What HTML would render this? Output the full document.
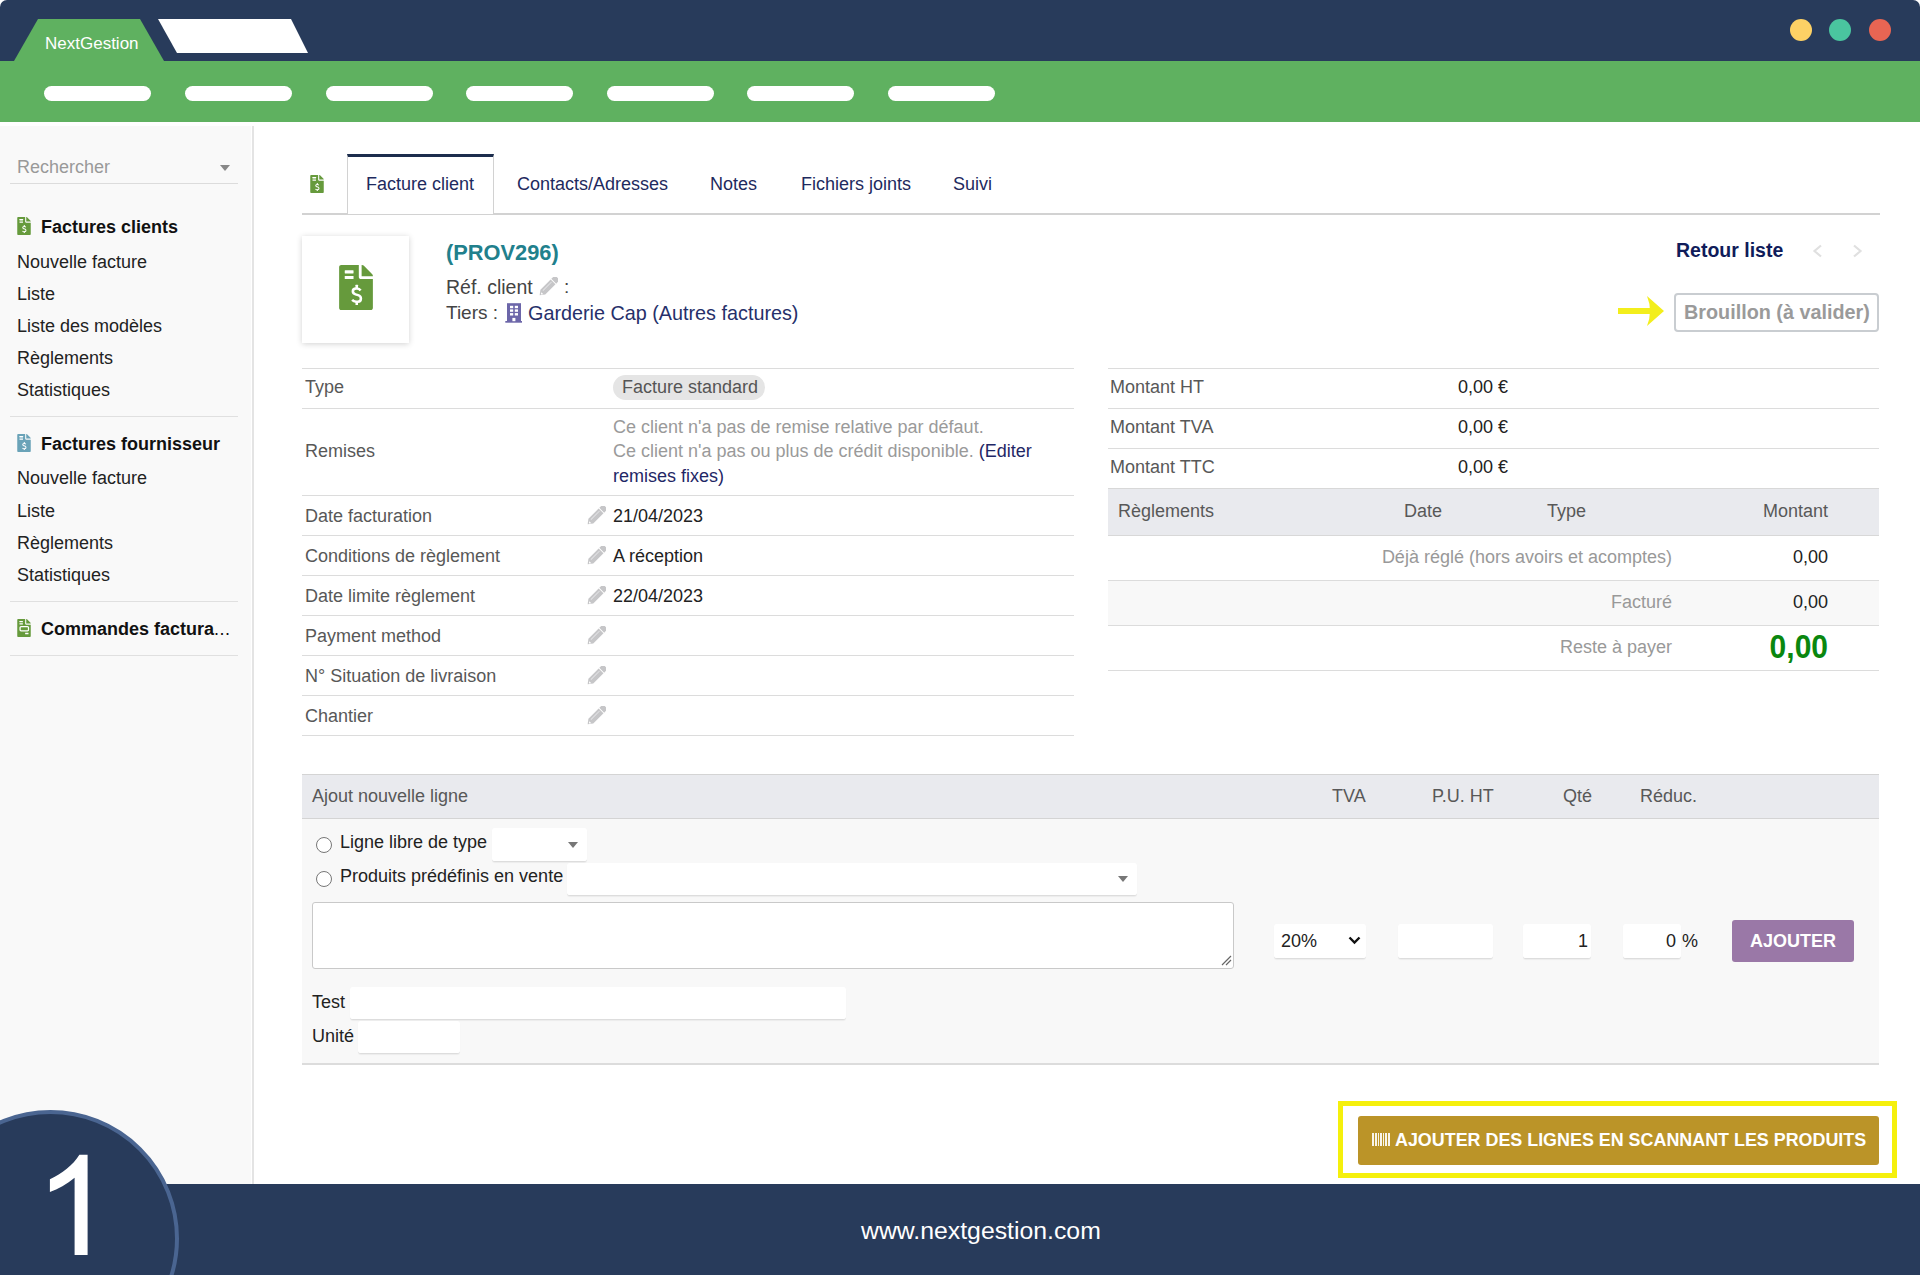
<!DOCTYPE html>
<html><head><meta charset="utf-8">
<style>
*{margin:0;padding:0;box-sizing:border-box}
html,body{width:1920px;height:1275px;overflow:hidden;background:#fff;font-family:"Liberation Sans",sans-serif;color:#222}
.a{position:absolute}
.t{position:absolute;white-space:nowrap;line-height:20px;font-size:18px}
#top{left:0;top:0;width:1920px;height:61px;background:#283b5b;border-radius:7px 7px 0 0}
#green{left:0;top:61px;width:1920px;height:61px;background:#5fb160}
.pill{position:absolute;top:86px;width:107px;height:15px;border-radius:8px;background:#fff}
.dot{position:absolute;top:19px;width:22px;height:22px;border-radius:50%}
#side{left:0;top:126px;width:251px;height:1058px;background:#f9f9f9}
#sideb{left:252px;top:126px;width:2px;height:1058px;background:#e4e4e4}
.sep{position:absolute;left:10px;width:228px;height:1px;background:#e0e0e0}
.si{position:absolute;left:17px;white-space:nowrap;font-size:18px;line-height:20px;color:#222}
.sh{position:absolute;left:41px;white-space:nowrap;font-size:18px;line-height:20px;font-weight:bold;color:#111}
#foot{left:0;top:1184px;width:1920px;height:91px;background:#283b5b}
.tab{color:#1e2a5e}
.lb{left:305px;color:#585858}
.r{text-align:right}
.hl{position:absolute;left:302px;width:772px;height:1px;background:#dcdcdc}
.hr{position:absolute;left:1108px;width:771px;height:1px;background:#dcdcdc}
.radio{width:16px;height:16px;border-radius:50%;border:1px solid #777;background:#fff}
.inp{background:#fff;border-radius:3px;border-bottom:1px solid #ddd;box-shadow:0 1px 1px rgba(0,0,0,.05)}
</style></head><body>
<div id="top" class="a"></div>
<svg class="a" style="left:0;top:0" width="320" height="62">
  <polygon points="14,61 38,19 140,19 164,61" fill="#5fb160"/>
  <polygon points="158,19 291,19 308,53 177,53" fill="#fff"/>
</svg>
<div class="t" style="left:45px;top:34px;font-size:17px;color:#fff">NextGestion</div>
<div class="dot" style="left:1790px;background:#fdd165"></div>
<div class="dot" style="left:1829px;background:#4ac59f"></div>
<div class="dot" style="left:1869px;background:#e86553"></div>
<div id="green" class="a"></div>
<div class="pill" style="left:44px"></div>
<div class="pill" style="left:185px"></div>
<div class="pill" style="left:326px"></div>
<div class="pill" style="left:466px"></div>
<div class="pill" style="left:607px"></div>
<div class="pill" style="left:747px"></div>
<div class="pill" style="left:888px"></div>

<!-- SIDEBAR -->
<div id="side" class="a"></div><div id="sideb" class="a"></div>


<div class="t" style="left:17px;top:157px;color:#999">Rechercher</div>
<svg class="a" style="left:220px;top:165px" width="10" height="7"><polygon points="0,0 10,0 5,6" fill="#888"/></svg>
<div class="sep" style="top:183px;left:10px;width:228px;background:#dcdcdc"></div>
<svg class="a" style="left:17px;top:217px;fill:#669a3c" width="14" height="18" viewBox="0 0 384 512"><path d="M224,136V0H24C10.7,0 0,10.7 0,24V488C0,501.3 10.7,512 24,512H360C373.3,512 384,501.3 384,488V160H248C234.8,160 224,149.2 224,136Z"/>
   <path d="M377,105L279.1,7C274.6,2.5 268.5,0 262.1,0H256V128H384V121.9C384,115.6 381.5,109.5 377,105Z"/>
   <rect x="64" y="60" width="100" height="36" rx="4" fill="#fff"/>
   <rect x="64" y="126" width="100" height="34" rx="4" fill="#fff"/>
   <path d="M244,290C234,274 220,267 203,267H193C170,267 156,282 156,300C156,318 168,329 186,334L216,343C236,349 248,363 248,383C248,403 234,417 211,417H193C173,417 158,409 148,398" fill="none" stroke="#fff" stroke-width="29"/>
   <rect x="186" y="226" width="29" height="44" rx="4" fill="#fff"/>
   <rect x="186" y="412" width="29" height="44" rx="4" fill="#fff"/></svg>
<div class="sh" style="top:217px">Factures clients</div>
<div class="si" style="top:252px">Nouvelle facture</div>
<div class="si" style="top:284px">Liste</div>
<div class="si" style="top:316px">Liste des modèles</div>
<div class="si" style="top:348px">Règlements</div>
<div class="si" style="top:380px">Statistiques</div>
<div class="sep" style="top:416px"></div>
<svg class="a" style="left:17px;top:434px;fill:#6aa3b8" width="14" height="18" viewBox="0 0 384 512"><path d="M224,136V0H24C10.7,0 0,10.7 0,24V488C0,501.3 10.7,512 24,512H360C373.3,512 384,501.3 384,488V160H248C234.8,160 224,149.2 224,136Z"/>
   <path d="M377,105L279.1,7C274.6,2.5 268.5,0 262.1,0H256V128H384V121.9C384,115.6 381.5,109.5 377,105Z"/>
   <rect x="64" y="60" width="100" height="36" rx="4" fill="#fff"/>
   <rect x="64" y="126" width="100" height="34" rx="4" fill="#fff"/>
   <path d="M244,290C234,274 220,267 203,267H193C170,267 156,282 156,300C156,318 168,329 186,334L216,343C236,349 248,363 248,383C248,403 234,417 211,417H193C173,417 158,409 148,398" fill="none" stroke="#fff" stroke-width="29"/>
   <rect x="186" y="226" width="29" height="44" rx="4" fill="#fff"/>
   <rect x="186" y="412" width="29" height="44" rx="4" fill="#fff"/></svg>
<div class="sh" style="top:434px">Factures fournisseur</div>
<div class="si" style="top:468px">Nouvelle facture</div>
<div class="si" style="top:501px">Liste</div>
<div class="si" style="top:533px">Règlements</div>
<div class="si" style="top:565px">Statistiques</div>
<div class="sep" style="top:601px"></div>
<svg class="a" style="left:17px;top:619px;fill:#669a3c" width="14" height="18" viewBox="0 0 384 512"><path d="M224,136V0H24C10.7,0 0,10.7 0,24V488C0,501.3 10.7,512 24,512H360C373.3,512 384,501.3 384,488V160H248C234.8,160 224,149.2 224,136Z"/>
   <path d="M377,105L279.1,7C274.6,2.5 268.5,0 262.1,0H256V128H384V121.9C384,115.6 381.5,109.5 377,105Z"/>
   <rect x="64" y="60" width="96" height="34" rx="4" fill="#fff"/>
   <rect x="64" y="124" width="96" height="34" rx="4" fill="#fff"/>
   <rect x="80" y="216" width="240" height="120" rx="28" fill="none" stroke="#fff" stroke-width="36"/>
   <rect x="224" y="392" width="96" height="40" rx="6" fill="#fff"/></svg>
<div class="sh" style="top:619px">Commandes factura<span style="font-weight:normal;letter-spacing:0.5px">...</span></div>
<div class="sep" style="top:655px"></div>



<!-- tabs -->
<svg class="a" style="left:310px;top:175px;fill:#669a3c" width="14" height="18" viewBox="0 0 384 512"><path d="M224,136V0H24C10.7,0 0,10.7 0,24V488C0,501.3 10.7,512 24,512H360C373.3,512 384,501.3 384,488V160H248C234.8,160 224,149.2 224,136Z"/>
   <path d="M377,105L279.1,7C274.6,2.5 268.5,0 262.1,0H256V128H384V121.9C384,115.6 381.5,109.5 377,105Z"/>
   <rect x="64" y="60" width="100" height="36" rx="4" fill="#fff"/>
   <rect x="64" y="126" width="100" height="34" rx="4" fill="#fff"/>
   <path d="M244,290C234,274 220,267 203,267H193C170,267 156,282 156,300C156,318 168,329 186,334L216,343C236,349 248,363 248,383C248,403 234,417 211,417H193C173,417 158,409 148,398" fill="none" stroke="#fff" stroke-width="29"/>
   <rect x="186" y="226" width="29" height="44" rx="4" fill="#fff"/>
   <rect x="186" y="412" width="29" height="44" rx="4" fill="#fff"/></svg>
<div class="a" style="left:302px;top:213px;width:1578px;height:2px;background:#d2d2d2"></div>
<div class="a" style="left:347px;top:154px;width:147px;height:60px;background:#fff;border:1px solid #d2d2d2;border-bottom:none;border-top:3px solid #1c2d4d"></div>
<div class="t tab" style="left:366px;top:174px">Facture client</div>
<div class="t tab" style="left:517px;top:174px">Contacts/Adresses</div>
<div class="t tab" style="left:710px;top:174px">Notes</div>
<div class="t tab" style="left:801px;top:174px">Fichiers joints</div>
<div class="t tab" style="left:953px;top:174px">Suivi</div>

<!-- header -->
<div class="a" style="left:302px;top:236px;width:107px;height:107px;background:#fff;box-shadow:0 1px 6px rgba(0,0,0,.18)"></div>
<svg class="a" style="left:339px;top:265px;fill:#669a3c" width="34" height="45" viewBox="0 0 384 512"><path d="M224,136V0H24C10.7,0 0,10.7 0,24V488C0,501.3 10.7,512 24,512H360C373.3,512 384,501.3 384,488V160H248C234.8,160 224,149.2 224,136Z"/>
   <path d="M377,105L279.1,7C274.6,2.5 268.5,0 262.1,0H256V128H384V121.9C384,115.6 381.5,109.5 377,105Z"/>
   <rect x="64" y="60" width="100" height="36" rx="4" fill="#fff"/>
   <rect x="64" y="126" width="100" height="34" rx="4" fill="#fff"/>
   <path d="M244,290C234,274 220,267 203,267H193C170,267 156,282 156,300C156,318 168,329 186,334L216,343C236,349 248,363 248,383C248,403 234,417 211,417H193C173,417 158,409 148,398" fill="none" stroke="#fff" stroke-width="29"/>
   <rect x="186" y="226" width="29" height="44" rx="4" fill="#fff"/>
   <rect x="186" y="412" width="29" height="44" rx="4" fill="#fff"/></svg>
<div class="t" style="left:446px;top:242px;font-size:21.8px;line-height:22px;font-weight:bold;color:#21808c">(PROV296)</div>
<div class="t" style="left:446px;top:277px;font-size:19.5px;color:#444">Réf. client</div>
<svg class="a" style="left:539px;top:277px" width="19" height="19" viewBox="0 0 100 100"><g transform="translate(50,50) rotate(-45)" fill="#c6c6c8"><path d="M-66,0 L-42,-18 H34 V18 H-42 Z"/><path d="M-58,2 L-48,-6 L-48,10 Z" fill="#fff"/><rect x="-36" y="-8" width="64" height="5" fill="#e2e2e4"/><path d="M39,-18 H54 Q66,-18 66,-6 V6 Q66,18 54,18 H39 Z"/></g></svg>
<div class="t" style="left:564px;top:277px;font-size:19px;color:#444">:</div>
<div class="t" style="left:446px;top:303px;font-size:19px;color:#444">Tiers :</div>
<svg class="a" style="left:500px;top:298px" width="30" height="28" viewBox="500 298 30 28"><rect x="507" y="303.2" width="14" height="18.3" fill="#6c66a9"/><rect x="505.3" y="321" width="16.7" height="1.7" fill="#6c66a9"/><g fill="#fff"><rect x="510" y="305.8" width="3.2" height="2.4"/><rect x="514.8" y="305.8" width="3.2" height="2.4"/><rect x="510" y="309.4" width="3.2" height="2.4"/><rect x="514.8" y="309.4" width="3.2" height="2.4"/><rect x="510" y="313.1" width="3.2" height="2.4"/><rect x="514.8" y="313.1" width="3.2" height="2.4"/><rect x="512.4" y="317.9" width="3" height="3.3"/></g></svg>
<div class="t" style="left:528px;top:303px;font-size:19.8px;color:#26306a">Garderie Cap (Autres factures)</div>

<div class="t" style="left:1676px;top:240px;font-size:19.5px;font-weight:bold;color:#101c5a">Retour liste</div>
<svg class="a" style="left:1811px;top:244px" width="12" height="14"><polyline points="10,1.5 3.5,7 10,12.5" fill="none" stroke="#e0e0e0" stroke-width="2.2"/></svg>
<svg class="a" style="left:1852px;top:244px" width="12" height="14"><polyline points="2,1.5 8.5,7 2,12.5" fill="none" stroke="#e0e0e0" stroke-width="2.2"/></svg>
<div class="a" style="left:1674px;top:293px;width:205px;height:39px;border:2px solid #c9cdd1;border-radius:4px"></div>
<div class="t" style="left:1684px;top:302px;font-size:19.8px;font-weight:bold;color:#9a9a9a">Brouillon (à valider)</div>
<svg class="a" style="left:1617px;top:295px" width="50" height="32"><rect x="1" y="13" width="34" height="6" fill="#f3ee1c"/><path d="M30,1 L47,16 L30,31 Q36,16 30,1 Z" fill="#f3ee1c"/></svg>

<!-- left table -->
<div class="hl" style="top:368px"></div>
<div class="hl" style="top:408px"></div>
<div class="hl" style="top:495px"></div>
<div class="hl" style="top:535px"></div>
<div class="hl" style="top:575px"></div>
<div class="hl" style="top:615px"></div>
<div class="hl" style="top:655px"></div>
<div class="hl" style="top:695px"></div>
<div class="hl" style="top:735px"></div>
<div class="t lb" style="top:377px">Type</div>
<div class="a" style="left:613px;top:375px;width:152px;height:25px;border-radius:13px;background:#e5e5e5"></div>
<div class="t" style="left:622px;top:377px;color:#555">Facture standard</div>
<div class="t lb" style="top:441px">Remises</div>
<div class="t" style="left:613px;top:417px;color:#9a9a9a">Ce client n'a pas de remise relative par défaut.</div>
<div class="t" style="left:613px;top:441px;color:#9a9a9a">Ce client n'a pas ou plus de crédit disponible. <span style="color:#1f2766">(Editer</span></div>
<div class="t" style="left:613px;top:466px;color:#1f2766">remises fixes)</div>
<div class="t lb" style="top:506px">Date facturation</div>
<div class="t lb" style="top:546px">Conditions de règlement</div>
<div class="t lb" style="top:586px">Date limite règlement</div>
<div class="t lb" style="top:626px">Payment method</div>
<div class="t lb" style="top:666px">N° Situation de livraison</div>
<div class="t lb" style="top:706px">Chantier</div>
<svg class="a" style="left:587px;top:506px" width="19" height="19" viewBox="0 0 100 100"><g transform="translate(50,50) rotate(-45)" fill="#c6c6c8"><path d="M-66,0 L-42,-18 H34 V18 H-42 Z"/><path d="M-58,2 L-48,-6 L-48,10 Z" fill="#fff"/><rect x="-36" y="-8" width="64" height="5" fill="#e2e2e4"/><path d="M39,-18 H54 Q66,-18 66,-6 V6 Q66,18 54,18 H39 Z"/></g></svg><svg class="a" style="left:587px;top:546px" width="19" height="19" viewBox="0 0 100 100"><g transform="translate(50,50) rotate(-45)" fill="#c6c6c8"><path d="M-66,0 L-42,-18 H34 V18 H-42 Z"/><path d="M-58,2 L-48,-6 L-48,10 Z" fill="#fff"/><rect x="-36" y="-8" width="64" height="5" fill="#e2e2e4"/><path d="M39,-18 H54 Q66,-18 66,-6 V6 Q66,18 54,18 H39 Z"/></g></svg><svg class="a" style="left:587px;top:586px" width="19" height="19" viewBox="0 0 100 100"><g transform="translate(50,50) rotate(-45)" fill="#c6c6c8"><path d="M-66,0 L-42,-18 H34 V18 H-42 Z"/><path d="M-58,2 L-48,-6 L-48,10 Z" fill="#fff"/><rect x="-36" y="-8" width="64" height="5" fill="#e2e2e4"/><path d="M39,-18 H54 Q66,-18 66,-6 V6 Q66,18 54,18 H39 Z"/></g></svg><svg class="a" style="left:587px;top:626px" width="19" height="19" viewBox="0 0 100 100"><g transform="translate(50,50) rotate(-45)" fill="#c6c6c8"><path d="M-66,0 L-42,-18 H34 V18 H-42 Z"/><path d="M-58,2 L-48,-6 L-48,10 Z" fill="#fff"/><rect x="-36" y="-8" width="64" height="5" fill="#e2e2e4"/><path d="M39,-18 H54 Q66,-18 66,-6 V6 Q66,18 54,18 H39 Z"/></g></svg><svg class="a" style="left:587px;top:666px" width="19" height="19" viewBox="0 0 100 100"><g transform="translate(50,50) rotate(-45)" fill="#c6c6c8"><path d="M-66,0 L-42,-18 H34 V18 H-42 Z"/><path d="M-58,2 L-48,-6 L-48,10 Z" fill="#fff"/><rect x="-36" y="-8" width="64" height="5" fill="#e2e2e4"/><path d="M39,-18 H54 Q66,-18 66,-6 V6 Q66,18 54,18 H39 Z"/></g></svg><svg class="a" style="left:587px;top:706px" width="19" height="19" viewBox="0 0 100 100"><g transform="translate(50,50) rotate(-45)" fill="#c6c6c8"><path d="M-66,0 L-42,-18 H34 V18 H-42 Z"/><path d="M-58,2 L-48,-6 L-48,10 Z" fill="#fff"/><rect x="-36" y="-8" width="64" height="5" fill="#e2e2e4"/><path d="M39,-18 H54 Q66,-18 66,-6 V6 Q66,18 54,18 H39 Z"/></g></svg>
<div class="t" style="left:613px;top:506px">21/04/2023</div>
<div class="t" style="left:613px;top:546px">A réception</div>
<div class="t" style="left:613px;top:586px">22/04/2023</div>

<!-- right table -->
<div class="hr" style="top:368px"></div>
<div class="hr" style="top:408px"></div>
<div class="hr" style="top:448px"></div>
<div class="a" style="left:1108px;top:488px;width:771px;height:48px;background:#e9eaee;border-top:1px solid #d8d8d8;border-bottom:1px solid #d8d8d8"></div>
<div class="a" style="left:1108px;top:581px;width:771px;height:44px;background:#f8f8f8"></div>
<div class="hr" style="top:580px"></div>
<div class="hr" style="top:625px"></div>
<div class="hr" style="top:670px"></div>
<div class="t lb" style="left:1110px;top:377px">Montant HT</div>
<div class="t lb" style="left:1110px;top:417px">Montant TVA</div>
<div class="t lb" style="left:1110px;top:457px">Montant TTC</div>
<div class="t r" style="right:412px;top:377px">0,00 €</div>
<div class="t r" style="right:412px;top:417px">0,00 €</div>
<div class="t r" style="right:412px;top:457px">0,00 €</div>
<div class="t lb" style="left:1118px;top:501px">Règlements</div>
<div class="t lb" style="left:1404px;top:501px">Date</div>
<div class="t lb" style="left:1547px;top:501px">Type</div>
<div class="t lb r" style="right:92px;top:501px">Montant</div>
<div class="t r" style="right:248px;top:547px;color:#999">Déjà réglé (hors avoirs et acomptes)</div>
<div class="t r" style="right:92px;top:547px">0,00</div>
<div class="t r" style="right:248px;top:592px;color:#999">Facturé</div>
<div class="t r" style="right:92px;top:592px">0,00</div>
<div class="t r" style="right:248px;top:637px;color:#999">Reste à payer</div>
<div class="t r" style="right:92px;top:631px;font-size:30px;line-height:30px;font-weight:bold;color:#0a870f;transform:scaleY(1.09);transform-origin:0 5px">0,00</div>

<!-- add line -->
<div class="a" style="left:302px;top:774px;width:1577px;height:45px;background:#e9eaee;border-top:1px solid #d4d4d4;border-bottom:1px solid #d4d4d4"></div>
<div class="a" style="left:302px;top:819px;width:1577px;height:246px;background:#f8f8f8;border-bottom:2px solid #dcdcdc"></div>
<div class="t lb" style="left:312px;top:786px">Ajout nouvelle ligne</div>
<div class="t lb" style="left:1332px;top:786px">TVA</div>
<div class="t lb" style="left:1432px;top:786px">P.U. HT</div>
<div class="t lb" style="left:1563px;top:786px">Qté</div>
<div class="t lb" style="left:1640px;top:786px">Réduc.</div>
<div class="a radio" style="left:316px;top:837px"></div>
<div class="t" style="left:340px;top:832px">Ligne libre de type</div>
<div class="a inp" style="left:492px;top:828px;width:95px;height:34px"></div>
<svg class="a" style="left:568px;top:842px" width="10" height="7"><polygon points="0,0 10,0 5,6" fill="#777"/></svg>
<div class="a radio" style="left:316px;top:871px"></div>
<div class="t" style="left:340px;top:866px">Produits prédéfinis en vente</div>
<div class="a inp" style="left:567px;top:863px;width:570px;height:33px"></div>
<svg class="a" style="left:1118px;top:876px" width="10" height="7"><polygon points="0,0 10,0 5,6" fill="#777"/></svg>
<div class="a" style="left:312px;top:902px;width:922px;height:67px;background:#fff;border:1px solid #c9c9c9;border-radius:3px"></div>
<svg class="a" style="left:1220px;top:954px" width="12" height="12"><path d="M2,11 L11,2 M6,11 L11,6" stroke="#666" stroke-width="1.2"/></svg>
<div class="t" style="left:312px;top:992px">Test</div>
<div class="a inp" style="left:350px;top:987px;width:496px;height:33px"></div>
<div class="t" style="left:312px;top:1026px">Unité</div>
<div class="a inp" style="left:358px;top:1021px;width:102px;height:33px"></div>
<div class="a inp" style="left:1274px;top:924px;width:92px;height:35px"></div>
<div class="t" style="left:1281px;top:931px">20%</div>
<svg class="a" style="left:1348px;top:936px" width="13" height="9"><polyline points="1.5,1.5 6.5,6.5 11.5,1.5" fill="none" stroke="#111" stroke-width="2.4"/></svg>
<div class="a inp" style="left:1398px;top:924px;width:95px;height:35px"></div>
<div class="a inp" style="left:1523px;top:924px;width:68px;height:35px"></div>
<div class="t" style="left:1578px;top:931px">1</div>
<div class="a inp" style="left:1623px;top:924px;width:58px;height:35px"></div>
<div class="t" style="left:1666px;top:931px">0</div>
<div class="t" style="left:1682px;top:931px">%</div>
<div class="a" style="left:1732px;top:920px;width:122px;height:42px;background:#9a78a7;border-radius:3px"></div>
<div class="t" style="left:1750px;top:931px;font-weight:bold;color:#fff">AJOUTER</div>

<!-- scan button -->
<div class="a" style="left:1338px;top:1101px;width:559px;height:77px;border:5px solid #f5f00c"></div>
<div class="a" style="left:1358px;top:1116px;width:521px;height:49px;background:#bb9428;border-radius:3px"></div>
<svg class="a" style="left:1372px;top:1133px" width="18" height="13"><g fill="#fff" opacity=".9"><rect x="0" y="0" width="2" height="13"/><rect x="3" y="0" width="2" height="13"/><rect x="6" y="0" width="1" height="13"/><rect x="8" y="0" width="2" height="13"/><rect x="11" y="0" width="1" height="13"/><rect x="13" y="0" width="2" height="13"/><rect x="16" y="0" width="2" height="13"/></g></svg>
<div class="t" style="left:1395px;top:1130px;font-size:17.9px;font-weight:bold;color:#fff">AJOUTER DES LIGNES EN SCANNANT LES PRODUITS</div>


<div id="foot" class="a"></div>

<div class="a" style="left:-78px;top:1110px;width:257px;height:257px;border-radius:50%;background:#283b5b;border:4px solid #4a6591"></div>
<svg class="a" style="left:0;top:1100px" width="120" height="175" viewBox="0 1100 120 175"><path d="M79.4,1154.8 H87.6 V1255 H74.6 V1177.7 C67,1184 58,1189 49.9,1192 V1179.2 C62,1174 73,1165 79.4,1154.8 Z" fill="#fff"/></svg>
<div class="t" style="left:861px;top:1217px;font-size:24.8px;line-height:28px;color:#fff">www.nextgestion.com</div>

</body></html>
